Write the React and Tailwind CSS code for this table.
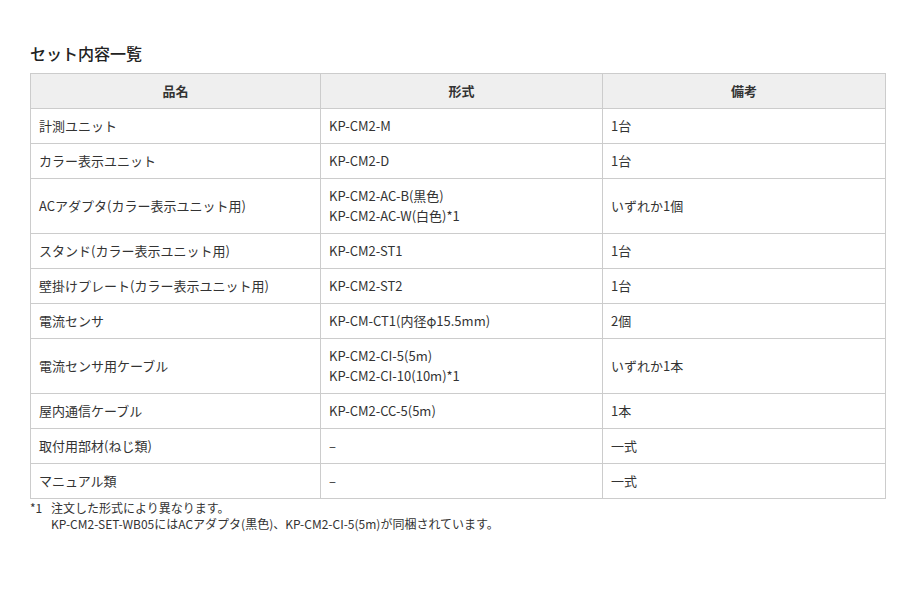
const rows = [
  { name: '計測ユニット', model: ['KP-CM2-M'], note: '1台' },
  { name: 'カラー表示ユニット', model: ['KP-CM2-D'], note: '1台' },
  { name: 'ACアダプタ(カラー表示ユニット用)', model: ['KP-CM2-AC-B(黒色)', 'KP-CM2-AC-W(白色)*1'], note: 'いずれか1個' },
  { name: 'スタンド(カラー表示ユニット用)', model: ['KP-CM2-ST1'], note: '1台' },
  { name: '壁掛けプレート(カラー表示ユニット用)', model: ['KP-CM2-ST2'], note: '1台' },
  { name: '電流センサ', model: ['KP-CM-CT1(内径φ15.5mm)'], note: '2個' },
  { name: '電流センサ用ケーブル', model: ['KP-CM2-CI-5(5m)', 'KP-CM2-CI-10(10m)*1'], note: 'いずれか1本' },
  { name: '屋内通信ケーブル', model: ['KP-CM2-CC-5(5m)'], note: '1本' },
  { name: '取付用部材(ねじ類)', model: ['–'], note: '一式' },
  { name: 'マニュアル類', model: ['–'], note: '一式' },
];

const font = { fontFamily: '"Noto Sans CJK JP", "Liberation Sans", sans-serif' };

export default function App() {
  return (
    <div className="w-[924px] h-[615px] bg-white text-[#333]" style={font}>
      <div className="pl-[30px] pt-[41px]">
        <h2 className="text-[16px] leading-[24px] font-medium text-[#222] mb-[8px]">セット内容一覧</h2>
        <table className="w-[855px] border-collapse text-[13px] table-fixed">
          <colgroup>
            <col className="w-[290px]" />
            <col className="w-[282px]" />
            <col className="w-[283px]" />
          </colgroup>
          <thead>
            <tr className="bg-[#efefef] h-[35px]">
              <th className="border border-[#cccccc] font-bold text-center">品名</th>
              <th className="border border-[#cccccc] font-bold text-center">形式</th>
              <th className="border border-[#cccccc] font-bold text-center">備考</th>
            </tr>
          </thead>
          <tbody>
            {rows.map((r) => (
              <tr key={r.name} className={r.model.length > 1 ? 'h-[55px]' : 'h-[35px]'}>
                <td className="border border-[#cccccc] px-[8px] leading-[20px]">{r.name}</td>
                <td className="border border-[#cccccc] px-[8px] leading-[20px]">
                  {r.model.map((m) => (
                    <div key={m}>{m}</div>
                  ))}
                </td>
                <td className="border border-[#cccccc] px-[8px] leading-[20px]">{r.note}</td>
              </tr>
            ))}
          </tbody>
        </table>
        <div className="text-[12px] leading-[16px] mt-[1px]">
          <div className="flex">
            <span className="w-[21px]">*1</span>
            <span>注文した形式により異なります。</span>
          </div>
          <div className="pl-[21px]">KP-CM2-SET-WB05にはACアダプタ(黒色)、KP-CM2-CI-5(5m)が同梱されています。</div>
        </div>
      </div>
    </div>
  );
}
